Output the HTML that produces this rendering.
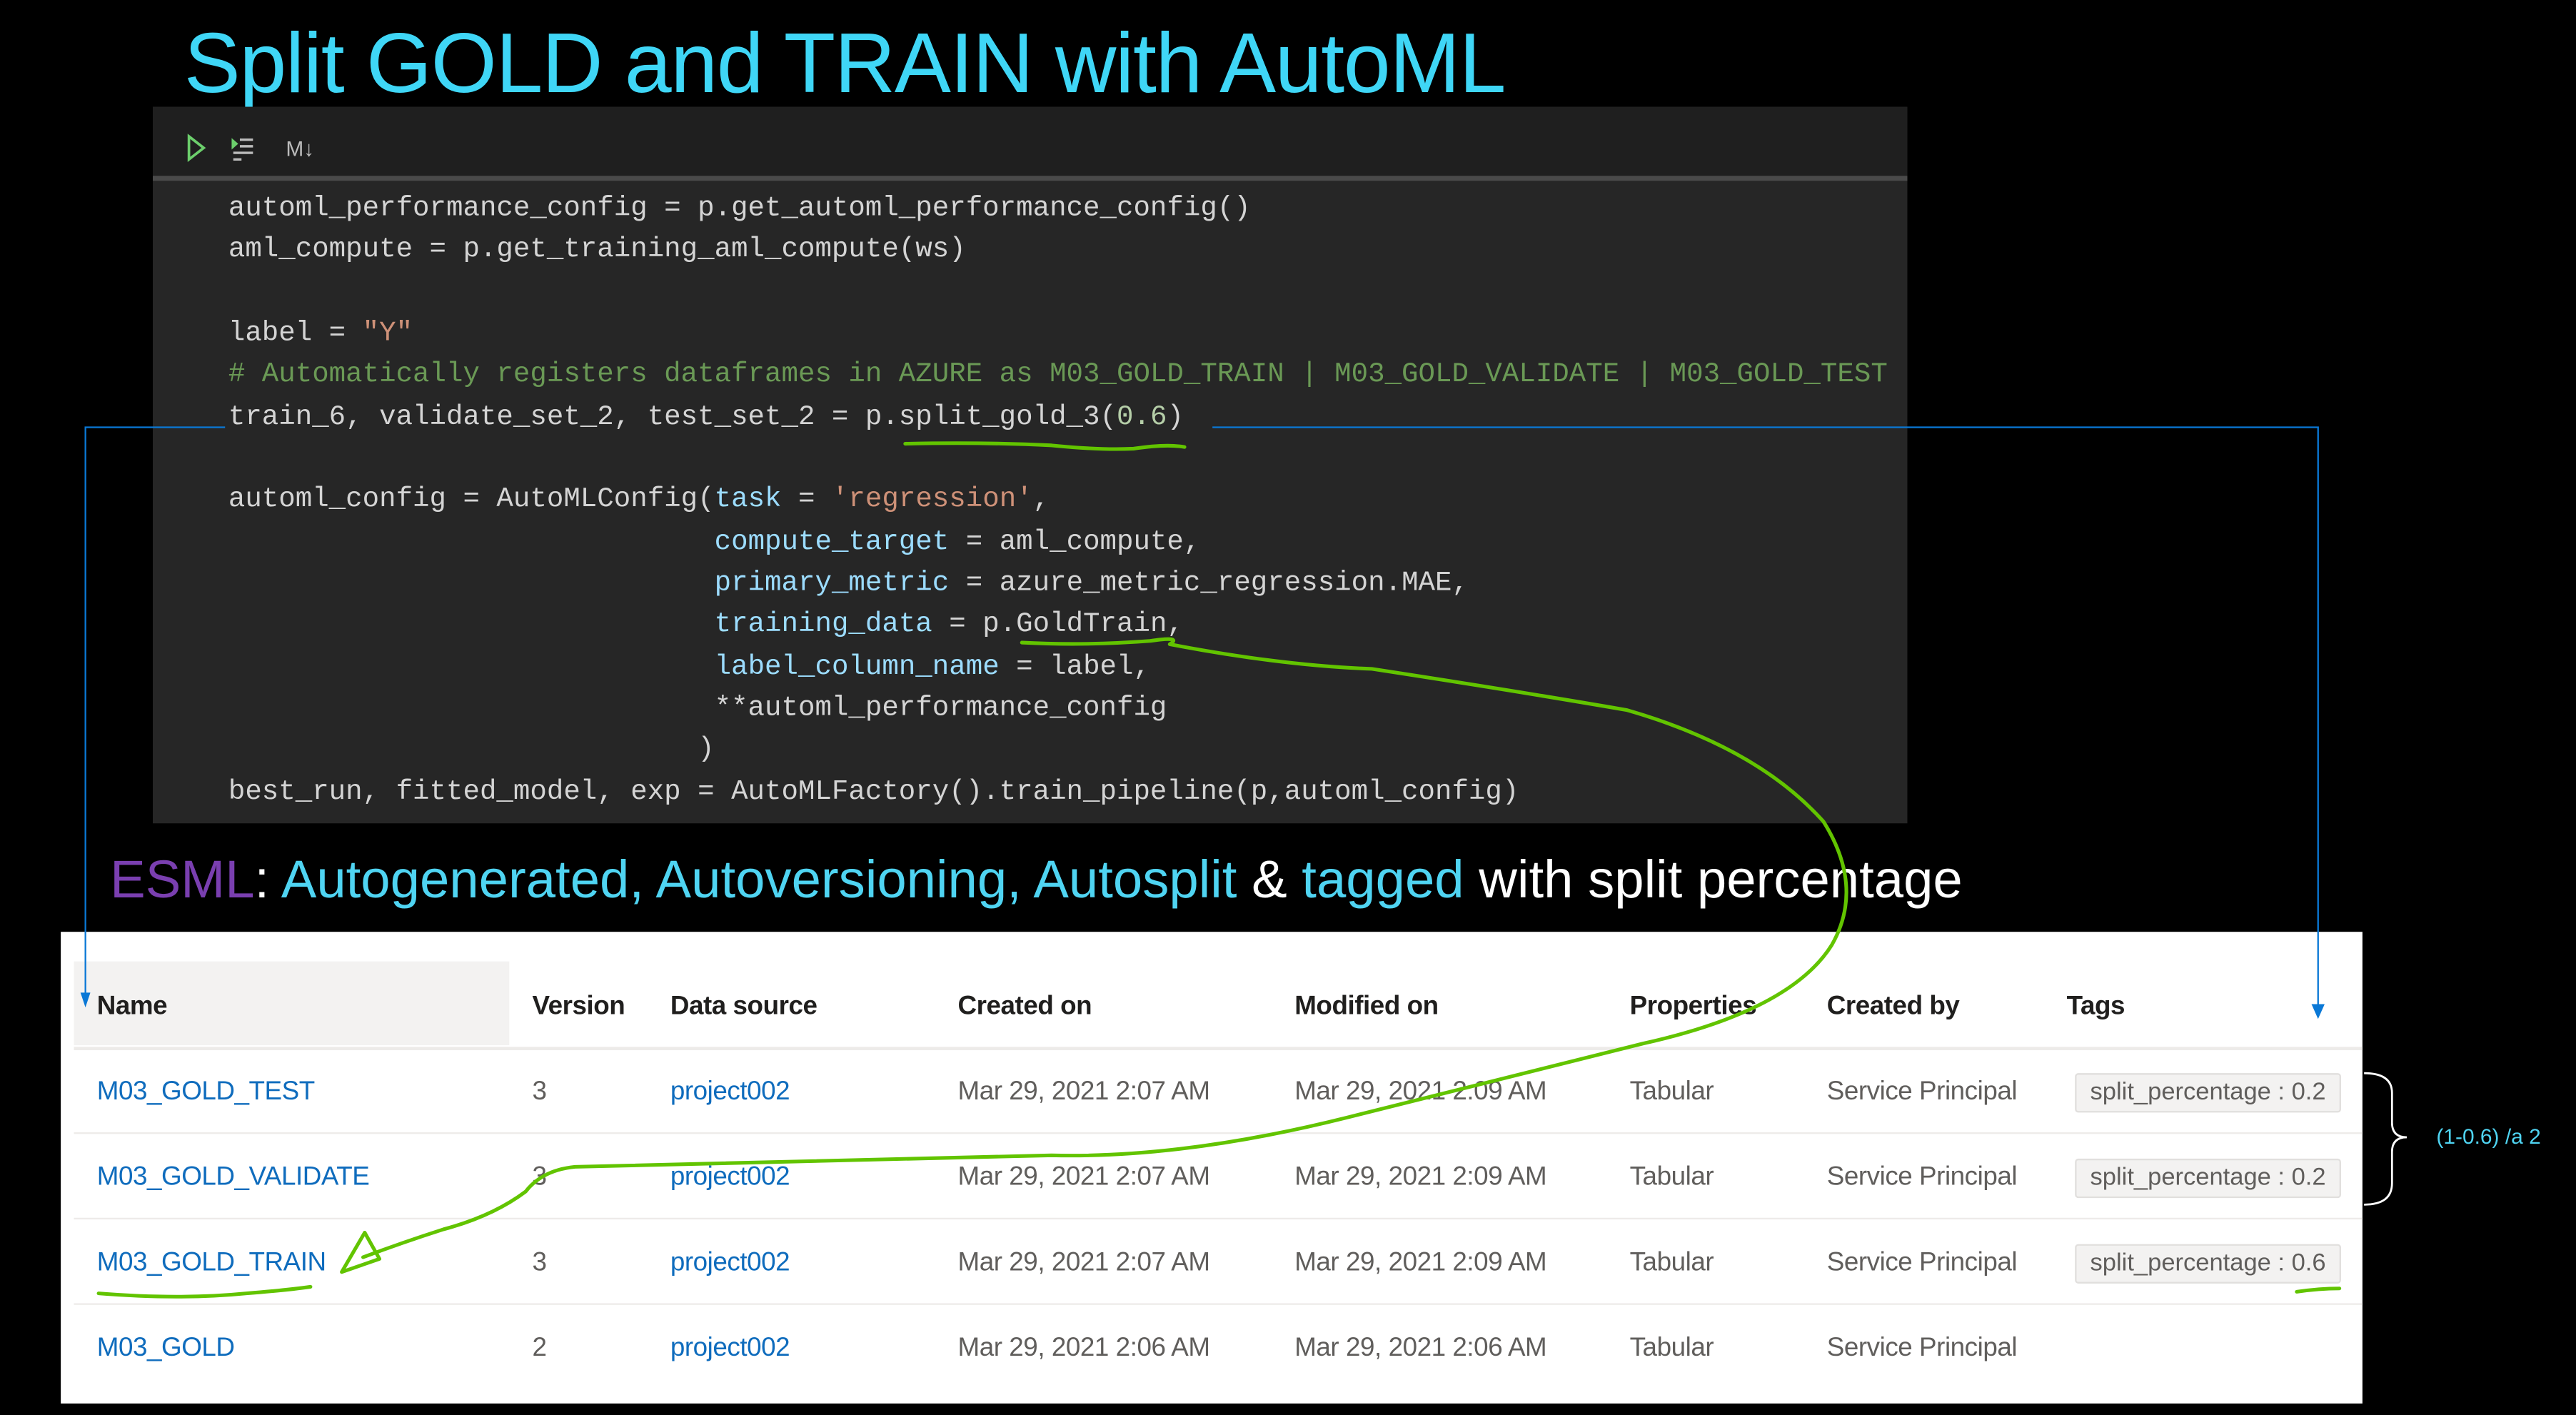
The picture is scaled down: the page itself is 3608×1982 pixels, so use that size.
<!DOCTYPE html>
<html><head><meta charset="utf-8"><style>
html,body{margin:0;padding:0;background:#000;overflow:hidden;width:3608px;height:1982px}
#s{position:absolute;left:0;top:0;width:1568px;height:861px;transform:scale(2.30102,2.30197);transform-origin:0 0;background:#000;font-family:"Liberation Sans",sans-serif}
.a{position:absolute;white-space:pre}
#title{left:112px;top:8px;font-size:51.5px;color:#3fd6f6;letter-spacing:-0.6px}
#code{left:93px;top:65px;width:1068px;height:436px;background:#262626}
#bar{position:absolute;left:0;top:0;width:100%;height:42px;background:#1f1f1f;border-bottom:3px solid #4a4a4a}
.cl{position:absolute;left:46px;font-family:"Liberation Mono",monospace;font-size:17px;color:#d4d4d4;white-space:pre;line-height:25px;margin-top:2px}
.s{color:#ce9178}.c{color:#6a9955}.k{color:#9cdcfe}.n{color:#b5cea8}
#esml{left:67px;top:517px;font-size:32.3px;color:#fff}
.cy{color:#4fd4f2}.pu{color:#7a3fb0}
#tbl{left:37px;top:567px;width:1401px;height:287px;background:#fff}
.h{position:absolute;top:604px;font-size:16px;color:#201f1e;font-weight:bold;letter-spacing:-0.2px}
.t{position:absolute;font-size:16px;color:#605e5c;white-space:pre;margin-top:2px;letter-spacing:-0.2px}
.l{color:#0f6cbd}
.hr{position:absolute;left:45px;width:1393px;height:2px;background:#edebe9}
.tag{position:absolute;left:1263px;width:160px;height:22px;background:#f3f2f1;border:1px solid #e1dfdd;border-radius:2px;font-size:15px;color:#605e5c;line-height:22px;text-align:center}
</style></head><body><div id="s">
<div class="a" id="title">Split GOLD and TRAIN with AutoML</div>
<div class="a" id="code">
 <div id="bar">
  <svg width="100" height="42" style="position:absolute;left:0;top:0">
   <path d="M22 18 L22 32 L31 25 Z" fill="none" stroke="#6ccf6c" stroke-width="1.6"/>
   <path d="M48 19 L48 26 L52 22.5Z" fill="#6ccf6c"/>
   <path d="M53 20h8M53 24h8M49 28h12M49 32h5" stroke="#bbb" stroke-width="1.5"/>
   <text x="81" y="30" font-size="13" fill="#bbb" font-family="Liberation Sans">M↓</text>
  </svg>
 </div>
 <div class="cl" style="top:48px">automl_performance_config = p.get_automl_performance_config()</div>
 <div class="cl" style="top:73px">aml_compute = p.get_training_aml_compute(ws)</div>
 <div class="cl" style="top:124px">label = <span class="s">"Y"</span></div>
 <div class="cl" style="top:149px"><span class="c"># Automatically registers dataframes in AZURE as M03_GOLD_TRAIN | M03_GOLD_VALIDATE | M03_GOLD_TEST</span></div>
 <div class="cl" style="top:175px">train_6, validate_set_2, test_set_2 = p.split_gold_3(<span class="n">0.6</span>)</div>
 <div class="cl" style="top:225px">automl_config = AutoMLConfig(<span class="k">task</span> = <span class="s">'regression'</span>,</div>
 <div class="cl" style="top:251px">                             <span class="k">compute_target</span> = aml_compute,</div>
 <div class="cl" style="top:276px">                             <span class="k">primary_metric</span> = azure_metric_regression.MAE,</div>
 <div class="cl" style="top:301px">                             <span class="k">training_data</span> = p.GoldTrain,</div>
 <div class="cl" style="top:327px">                             <span class="k">label_column_name</span> = label,</div>
 <div class="cl" style="top:352px">                             **automl_performance_config</div>
 <div class="cl" style="top:377px">                            )</div>
 <div class="cl" style="top:403px">best_run, fitted_model, exp = AutoMLFactory().train_pipeline(p,automl_config)</div>
</div>
<div class="a" id="esml"><span class="pu">ESML</span>: <span class="cy">Autogenerated, Autoversioning, Autosplit</span> &amp; <span class="cy">tagged</span> with split percentage</div>
<div class="a" id="tbl"></div>
<div class="a" style="left:45px;top:585px;width:265px;height:51px;background:#f3f2f1"></div>
<div class="hr" style="top:637px"></div>
<div class="hr" style="top:689px;height:1px"></div>
<div class="hr" style="top:741px;height:1px"></div>
<div class="hr" style="top:793px;height:1px"></div>
<div class="h" style="left:59px">Name</div>
<div class="h" style="left:324px">Version</div>
<div class="h" style="left:408px">Data source</div>
<div class="h" style="left:583px">Created on</div>
<div class="h" style="left:788px">Modified on</div>
<div class="h" style="left:992px">Properties</div>
<div class="h" style="left:1112px">Created by</div>
<div class="h" style="left:1258px">Tags</div>

<div class="t l" style="left:59px;top:654px">M03_GOLD_TEST</div>
<div class="t l" style="left:59px;top:706px">M03_GOLD_VALIDATE</div>
<div class="t l" style="left:59px;top:758px">M03_GOLD_TRAIN</div>
<div class="t l" style="left:59px;top:810px">M03_GOLD</div>
<div class="t" style="left:324px;top:654px">3</div>
<div class="t" style="left:324px;top:706px">3</div>
<div class="t" style="left:324px;top:758px">3</div>
<div class="t" style="left:324px;top:810px">2</div>
<div class="t l" style="left:408px;top:654px">project002</div>
<div class="t l" style="left:408px;top:706px">project002</div>
<div class="t l" style="left:408px;top:758px">project002</div>
<div class="t l" style="left:408px;top:810px">project002</div>
<div class="t" style="left:583px;top:654px">Mar 29, 2021 2:07 AM</div>
<div class="t" style="left:583px;top:706px">Mar 29, 2021 2:07 AM</div>
<div class="t" style="left:583px;top:758px">Mar 29, 2021 2:07 AM</div>
<div class="t" style="left:583px;top:810px">Mar 29, 2021 2:06 AM</div>
<div class="t" style="left:788px;top:654px">Mar 29, 2021 2:09 AM</div>
<div class="t" style="left:788px;top:706px">Mar 29, 2021 2:09 AM</div>
<div class="t" style="left:788px;top:758px">Mar 29, 2021 2:09 AM</div>
<div class="t" style="left:788px;top:810px">Mar 29, 2021 2:06 AM</div>
<div class="t" style="left:992px;top:654px">Tabular</div>
<div class="t" style="left:992px;top:706px">Tabular</div>
<div class="t" style="left:992px;top:758px">Tabular</div>
<div class="t" style="left:992px;top:810px">Tabular</div>
<div class="t" style="left:1112px;top:654px">Service Principal</div>
<div class="t" style="left:1112px;top:706px">Service Principal</div>
<div class="t" style="left:1112px;top:758px">Service Principal</div>
<div class="t" style="left:1112px;top:810px">Service Principal</div>
<div class="tag" style="top:653px">split_percentage : 0.2</div>
<div class="tag" style="top:705px">split_percentage : 0.2</div>
<div class="tag" style="top:757px">split_percentage : 0.6</div>
<div class="a" style="left:1483px;top:684px;font-size:13px;color:#4fd4f2">(1-0.6) /a 2</div>

<svg width="1568" height="861" style="position:absolute;left:0;top:0" fill="none">
 <path d="M137 260 H52 V606" stroke="#0a78d6" stroke-width="1"/>
 <path d="M49 604 L55 604 L52 613Z" fill="#0a78d6"/>
 <path d="M738 260 H1411 V613" stroke="#0a78d6" stroke-width="1"/>
 <path d="M1407 611 L1415 611 L1411 620Z" fill="#0a78d6"/>
 <path d="M1439 653 Q1456 653 1456 665 V683 Q1456 692 1465 692 Q1456 692 1456 701 V720 Q1456 733 1439 733" stroke="#fff" stroke-width="1.2"/>
 <g stroke="#62c400" stroke-width="2.2" stroke-linecap="round" stroke-linejoin="round">
  <path d="M551 270 Q600 269 640 271 Q670 274 690 273 Q710 270 721 272"/>
  <path d="M622 391 Q660 393 700 390 Q720 387 712 392 Q780 405 835 407 Q920 420 990 432 Q1070 455 1110 500 Q1135 540 1115 575 Q1090 615 1000 635 Q900 660 820 680 Q720 705 640 703 Q500 707 350 710 Q330 712 320 725 Q300 740 270 748 Q245 756 221 765"/>
  <path d="M208 774 L222 750 L231 766 Z"/>
  <path d="M60 787 Q110 791 150 787 Q175 785 189 783"/>
  <path d="M1398 786 Q1412 784 1424 784"/>
 </g>
</svg>
</div></body></html>
